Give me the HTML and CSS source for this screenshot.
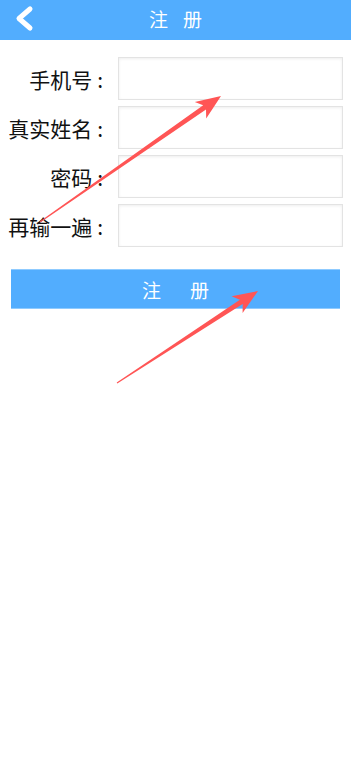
FILE: index.html
```html
<!DOCTYPE html>
<html>
<head>
<meta charset="UTF-8">
<title>注册</title>
<link rel="stylesheet" href="styles.css">
</head>
<body>

<header class="topbar">
<a class="back" href="#">
<svg width="40" height="40" viewBox="0 0 40 40">
<polyline points="30,9 19,18.5 30,28" fill="none" stroke="#fff" stroke-width="5" stroke-linecap="round" stroke-linejoin="round"/>
</svg>
</a>
<div class="title"><span>注</span><span>册</span></div>
</header>

<div class="form">
<div class="row">
<label class="label">手机号<span class="colon">:</span></label>
<input class="field" type="text">
</div>
<div class="row">
<label class="label">真实姓名<span class="colon">:</span></label>
<input class="field" type="text">
</div>
<div class="row">
<label class="label">密码<span class="colon">:</span></label>
<input class="field" type="password">
</div>
<div class="row">
<label class="label">再输一遍<span class="colon">:</span></label>
<input class="field" type="password">
</div>

<button class="submit"><span>注</span><span>册</span></button>
</div>

<!-- annotation arrows drawn over the screenshot -->
<svg class="marks" width="351" height="764" viewBox="0 0 351 764">
<polygon fill="#ff5555" points="39.7,221.6 203.2,105.3 194.8,102.1 221,96 206.2,118.5 206.0,109.5 40.3,222.4"/>
<polygon fill="#ff5555" points="116.7,382.6 239.9,299.8 231.6,296.3 258,291 242.6,313.1 242.7,304.0 117.3,383.4"/>
</svg>

</body>
</html>
```

FILE: styles.css
```css
body{
    margin:0;
    background:#fff;
    font-family:"Noto Sans CJK SC", "Noto Sans", sans-serif;
    color:#111;
    position:relative;
    min-height:764px;
}

.topbar{
    height:40px;
    background:#52adfe;
    position:relative;
    display:flex;
    align-items:center;
    justify-content:center;
}

.back{
    position:absolute;
    left:0;
    top:0;
    display:block;
    width:40px;
    height:40px;
}

.back svg{
    display:block;
}

.title{
    display:flex;
    gap:15px;
    color:#fff;
    font-size:19px;
    line-height:1;
    margin-top:-3px;
}

.form{
    padding:17px 8px 0 0;
}

.row{
    display:flex;
    align-items:center;
    margin-bottom:6px;
}

.label{
    width:119px;
    text-align:right;
    font-size:21px;
    padding-right:15px;
    box-sizing:border-box;
    white-space:nowrap;
}

.colon{
    margin-left:5px;
}

.field{
    flex:1;
    height:43px;
    box-sizing:border-box;
    border:1px solid #e3e3e3;
    background:#fff;
    box-shadow:inset 0 1px 3px rgba(0,0,0,0.07);
    margin:0;
    padding:0 8px;
    font-size:16px;
    outline:none;
}

.submit{
    display:flex;
    justify-content:center;
    align-items:center;
    gap:29px;
    width:329px;
    height:40px;
    margin:22px 0 0 11px;
    background:#52adfe;
    border:none;
    border-top:1px solid #8fcbff;
    border-bottom:1px solid #8fcbff;
    color:#fff;
    font-family:"Noto Sans CJK SC", sans-serif;
    font-size:19px;
    padding:0;
}

.marks{
    position:absolute;
    left:0;
    top:0;
    pointer-events:none;
}
```
